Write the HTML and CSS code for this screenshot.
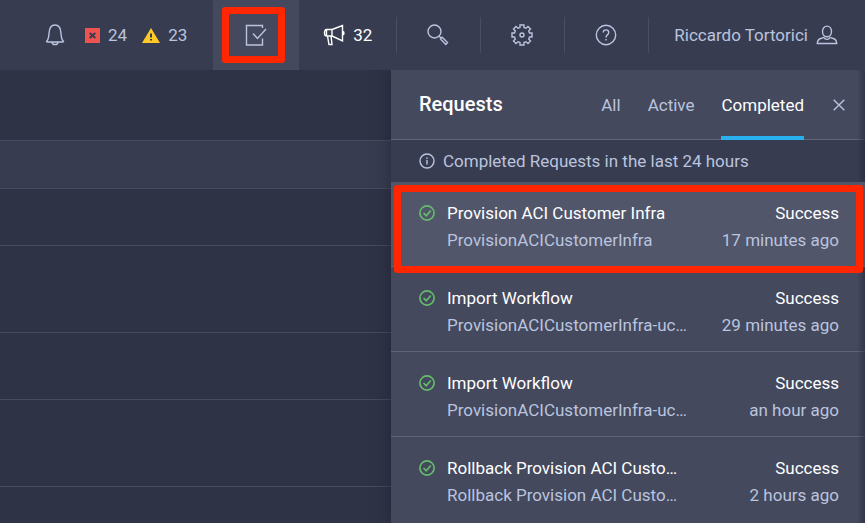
FILE: index.html
```html
<!DOCTYPE html>
<html lang="en">
<head>
<meta charset="utf-8">
<title>Requests</title>
<link rel="stylesheet" href="styles.css">
</head>
<body>
<header class="topbar">
  <button class="alerts" type="button" aria-label="Alarms">
    <svg class="icon bell" width="20" height="22" viewBox="0 0 20 22"><path d="M1.500 17.500C3.400 15.500 3.800 14 4 9.500C4.200 4 6.200 1 10 1s5.800 3 6 8.500c.2 4.500.6 6 2.500 8C18 18.300 17.500 18 17 18H3c-.5 0-1 .3-1.500-.5zM7 18.300c.5 3 5.500 3 6 0"/></svg>
    <svg class="fault" width="15" height="15" viewBox="0 0 15 15"><path fill="#ef5350" d="M0 0h15v15H0z"/><path d="M4.700 5l5.600 5M10.300 5l-5.600 5" stroke="#383c50" stroke-width="2"/></svg>
    <span class="count">24</span>
    <svg class="warning" width="18" height="15" viewBox="0 0 18 15"><path fill="#ffca28" d="M9 0l9 15H0z"/><path d="M9 5.500v4M9 11v1.500" stroke="#383c50" stroke-width="2"/></svg>
    <span class="count">23</span>
  </button>
  <button class="tasks" type="button" aria-label="Requests">
    <svg class="icon" width="22" height="22" viewBox="0 0 22 22"><path d="M17.500 4V1.500h-16v19.500h16v-6.500M8 9.500l4.500 5L21 5"/></svg>
  </button>
  <button class="news" type="button">
    <svg class="icon" width="22" height="22" viewBox="0 0 22 22"><path d="M9 5.500H3.500C.8 5.500.8 12 3.500 12H9zM3.500 5.500V12M9 5.500l10.500-4v15.500L9 12M19.500 7.500c2 0 2 3.500 0 3.500M4.500 12l1.500 8.500h3L8 12"/></svg>
    <span>32</span>
  </button>
  <button class="tool" type="button" aria-label="Search">
    <svg class="icon" width="22" height="22" viewBox="0 0 22 22"><circle cx="7.500" cy="7.500" r="6.500"/><path d="M12 12l2 2M13.500 15l1.700-1.800 5.300 5.300-1.700 2z"/></svg>
  </button>
  <button class="tool" type="button" aria-label="Settings">
    <svg class="icon" width="22" height="22" viewBox="0 0 22 22"><circle cx="11" cy="11" r="2"/><path d="M9 1h4v2.500l2 .8L17 2.500 19.500 5l-1.800 2 .8 2H21v4h-2.500l-.8 2 1.800 2-2.500 2.500-2-1.800-2 .8V21H9v-2.500l-2-.8-2 1.800L2.500 17l1.800-2-.8-2H1V9h2.500l.8-2-1.800-2L5 2.500l2 1.800 2-.8z"/></svg>
  </button>
  <button class="tool" type="button" aria-label="Help">
    <svg class="icon" width="22" height="22" viewBox="0 0 22 22"><circle cx="11" cy="11" r="9.700"/><path d="M8.300 8.500c0-3.500 5.400-3.500 5.400 0 0 2.500-2.700 2.300-2.700 5M11 15v1.500"/></svg>
  </button>
  <button class="user" type="button">
    <span>Riccardo Tortorici</span>
    <svg class="icon" width="22" height="20" viewBox="0 0 22 20"><path d="M6.500 6.500C6.500-.7 15.500-.7 15.500 6.500c0 7-9 7-9 0zM8 12.300L3.500 14c-1.500.7-2 2.500-2.200 4.500h19.400c-.2-2-.7-3.800-2.200-4.500L14 12.300M8 12.500c1 2.500 5 2.500 6 0"/></svg>
  </button>
</header>
<main class="workspace">
  <div class="rows">
    <div class="row"></div>
    <div class="row row-band"></div>
    <div class="row row-medium"></div>
    <div class="row row-tall"></div>
    <div class="row row-mid"></div>
    <div class="row row-tall"></div>
  </div>
  <section class="panel">
    <div class="panel-head">
      <h1>Requests</h1>
      <nav class="tabs">
        <a href="#all">All</a>
        <a href="#active">Active</a>
        <a class="current" href="#completed">Completed</a>
      </nav>
      <button class="close" type="button" aria-label="Close">
        <svg class="icon" width="12" height="12" viewBox="0 0 12 12"><path d="M.7.7l10.600 10.600M11.300.7L.7 11.300"/></svg>
      </button>
    </div>
    <p class="notice">
      <svg class="icon" width="16" height="16" viewBox="0 0 16 16"><circle cx="8" cy="8" r="7"/><path d="M8 7v4.500M8 4.500V6"/></svg>
      <span>Completed Requests in the last 24 hours</span>
    </p>
    <ul class="requests">
      <li class="request selected">
        <svg class="ok" width="16" height="16" viewBox="0 0 16 16"><circle cx="8" cy="8" r="7.100"/><path d="M4.500 8l2.700 2.700L11.800 5.500"/></svg>
        <div class="names"><p class="title">Provision ACI Customer Infra</p><p>ProvisionACICustomerInfra</p></div>
        <div class="status"><p class="title">Success</p><p>17 minutes ago</p></div>
      </li>
      <li class="request">
        <svg class="ok" width="16" height="16" viewBox="0 0 16 16"><circle cx="8" cy="8" r="7.100"/><path d="M4.500 8l2.700 2.700L11.800 5.500"/></svg>
        <div class="names"><p class="title">Import Workflow</p><p>ProvisionACICustomerInfra-uc…</p></div>
        <div class="status"><p class="title">Success</p><p>29 minutes ago</p></div>
      </li>
      <li class="request">
        <svg class="ok" width="16" height="16" viewBox="0 0 16 16"><circle cx="8" cy="8" r="7.100"/><path d="M4.500 8l2.700 2.700L11.800 5.500"/></svg>
        <div class="names"><p class="title">Import Workflow</p><p>ProvisionACICustomerInfra-uc…</p></div>
        <div class="status"><p class="title">Success</p><p>an hour ago</p></div>
      </li>
      <li class="request">
        <svg class="ok" width="16" height="16" viewBox="0 0 16 16"><circle cx="8" cy="8" r="7.100"/><path d="M4.500 8l2.700 2.700L11.800 5.500"/></svg>
        <div class="names"><p class="title">Rollback Provision ACI Custo…</p><p>Rollback Provision ACI Custo…</p></div>
        <div class="status"><p class="title">Success</p><p>2 hours ago</p></div>
      </li>
    </ul>
  </section>
</main>
</body>
</html>
```
FILE: styles.css
```css
* { box-sizing: border-box; }

body {
  display: flex;
  flex-direction: column;
  min-height: 100vh;
  margin: 0;
  background: #2e3346;
  color: #bac4de;
  font: 17px/27px Roboto, sans-serif;
}

h1, p, ul { margin: 0; padding: 0; list-style: none; }
a { color: inherit; text-decoration: none; }
svg { display: block; flex: none; }

button {
  display: flex;
  align-items: center;
  margin: 0;
  padding: 0;
  border: 0;
  background: none;
  color: inherit;
  font: inherit;
}

.icon { fill: none; stroke: currentColor; stroke-width: 1.4; }

.topbar {
  display: flex;
  justify-content: flex-end;
  flex: none;
  height: 70px;
  background: #383c51;
}

.alerts { padding-right: 26px; }
.bell { margin-right: 20px; }
.fault, .warning { margin-right: 8px; }
.fault + .count { margin-right: 15px; }

.tasks {
  position: relative;
  justify-content: center;
  width: 86px;
  background: #44495e;
}

.tasks::after {
  content: "";
  position: absolute;
  inset: 7px 14px 7px 9px;
  border: 7px solid #ff2600;
  border-radius: 3px;
}

.news {
  gap: 8px;
  padding: 0 24px;
  color: #fff;
}

.tool, .user { position: relative; }
.tool { justify-content: center; width: 84px; }

.tool::before, .user::before {
  content: "";
  position: absolute;
  left: 0;
  top: 17px;
  bottom: 17px;
  border-left: 1px solid #4a4e62;
}

.user { gap: 8px; padding: 0 27px 0 26px; }

.workspace { display: flex; flex: 1; }
.rows { flex: 1; }
.row { height: 71px; border-bottom: 1px solid #464b5f; }
.row-band { height: 48px; background: #383c51; }
.row-medium { height: 57px; }
.row-tall { height: 87px; }
.row-mid { height: 67px; }

.panel {
  position: relative;
  flex: 0 0 474px;
  background: #44495e;
  box-shadow: 0 0 16px rgba(20, 23, 38, 0.5);
  clip-path: inset(0 0 0 -24px);
}

.panel::after {
  content: "";
  position: absolute;
  inset: 0 0 0 auto;
  width: 8px;
  background: linear-gradient(to right, rgba(30, 34, 52, 0), rgba(30, 34, 52, 0.5));
}

.panel-head {
  display: flex;
  align-items: center;
  height: 70px;
  padding: 0 14px 0 28px;
  border-bottom: 1px solid #60657b;
}

h1 { flex: 1; color: #fff; font-size: 20px; font-weight: 500; }

.tabs { display: flex; gap: 27px; align-self: stretch; }
.tabs a { height: 70px; line-height: 70px; }
.tabs .current { border-bottom: 4px solid #29b0ee; color: #fff; }
.close { margin-left: 23px; padding: 6px; }

.notice {
  display: flex;
  align-items: center;
  gap: 8px;
  height: 42px;
  padding-left: 28px;
  background: #383c51;
}

.request {
  display: flex;
  gap: 12px;
  height: 85px;
  padding: 18px 26px 0 28px;
  border-bottom: 1px solid #60657b;
}

.request:last-child { border: 0; }

.selected { position: relative; z-index: 1; background: #51566b; }

.selected::after {
  content: "";
  position: absolute;
  inset: 3px 2px -7px 3px;
  border: 7px solid #ff2600;
  border-radius: 3px;
}

.ok { margin-top: 5px; fill: none; stroke: #66bb6a; stroke-width: 1.700; }
.names { flex: 1; }
.status { text-align: right; }
.title { color: #fff; }
```
